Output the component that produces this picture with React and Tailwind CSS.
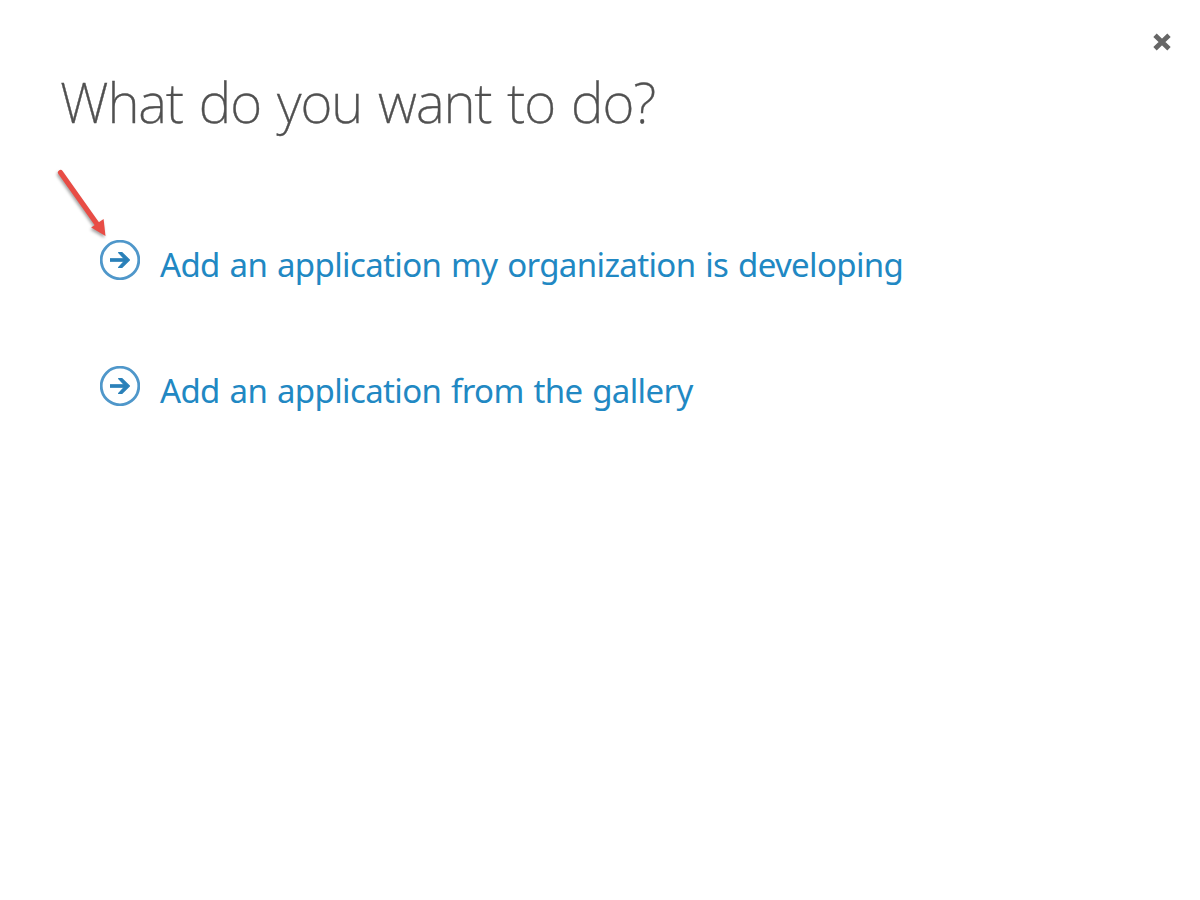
const actions = [
  'Add an application my organization is developing',
  'Add an application from the gallery',
];

function ArrowCircle() {
  return (
    <svg viewBox="0 0 40 40" className="size-10 shrink-0" fill="none" aria-hidden="true">
      <circle cx="20" cy="20" r="18.8" stroke="#4f97ca" strokeWidth="2.8" />
      <path d="M10 20H27" stroke="#2a80b9" strokeWidth="3.7" />
      <path
        d="M18.6 12.6H22L29.4 20L22 27.4H18.6L25.6 20Z"
        fill="#2a80b9"
        stroke="#2a80b9"
        strokeWidth="1.2"
        strokeLinejoin="round"
      />
    </svg>
  );
}

function Pointer() {
  return (
    <svg
      viewBox="0 0 70 90"
      className="pointer-events-none absolute top-[160px] left-[50px] h-[90px] w-[70px] drop-shadow-[-1px_2px_1.5px_rgba(0,0,0,0.35)]"
      aria-hidden="true"
    >
      <path d="M10.5 12.5L47 64" stroke="#e84c45" strokeWidth="5.2" strokeLinecap="round" />
      <path d="M55.5 76L41.2 67.4L53.6 59Z" fill="#e84c45" />
    </svg>
  );
}

export default function App() {
  return (
    <main className="relative flex h-[900px] w-[1200px] flex-col overflow-hidden bg-white font-['Noto_Sans','Open_Sans',sans-serif]">
      <header className="flex h-[160px] items-start justify-between pr-[28px] pl-[60px]">
        <h1 className="mt-[64px] text-[55px] leading-[75px] font-extralight tracking-[-1.05px] [word-spacing:2.6px] whitespace-nowrap text-[#505050] [-webkit-text-stroke:0.4px_#505050]">
          What do you want to do?
        </h1>
        <button type="button" aria-label="Close" className="mt-[32px]">
          <svg viewBox="0 0 20 20" className="size-5" fill="none">
            <path d="M3 3.2L17 16.8M17 3.2L3 16.8" stroke="#666" strokeWidth="4.8" />
          </svg>
        </button>
      </header>
      <nav className="flex flex-col gap-[86px] pt-[80px] pl-[100px]">
        {actions.map((label) => (
          <a key={label} href="#" className="flex h-10 items-start gap-5 text-[#2188c3]">
            <ArrowCircle />
            <span className="text-[33px] leading-[50px] tracking-[-0.63px] [word-spacing:1.8px] whitespace-nowrap">
              {label}
            </span>
          </a>
        ))}
      </nav>
      <Pointer />
    </main>
  );
}
